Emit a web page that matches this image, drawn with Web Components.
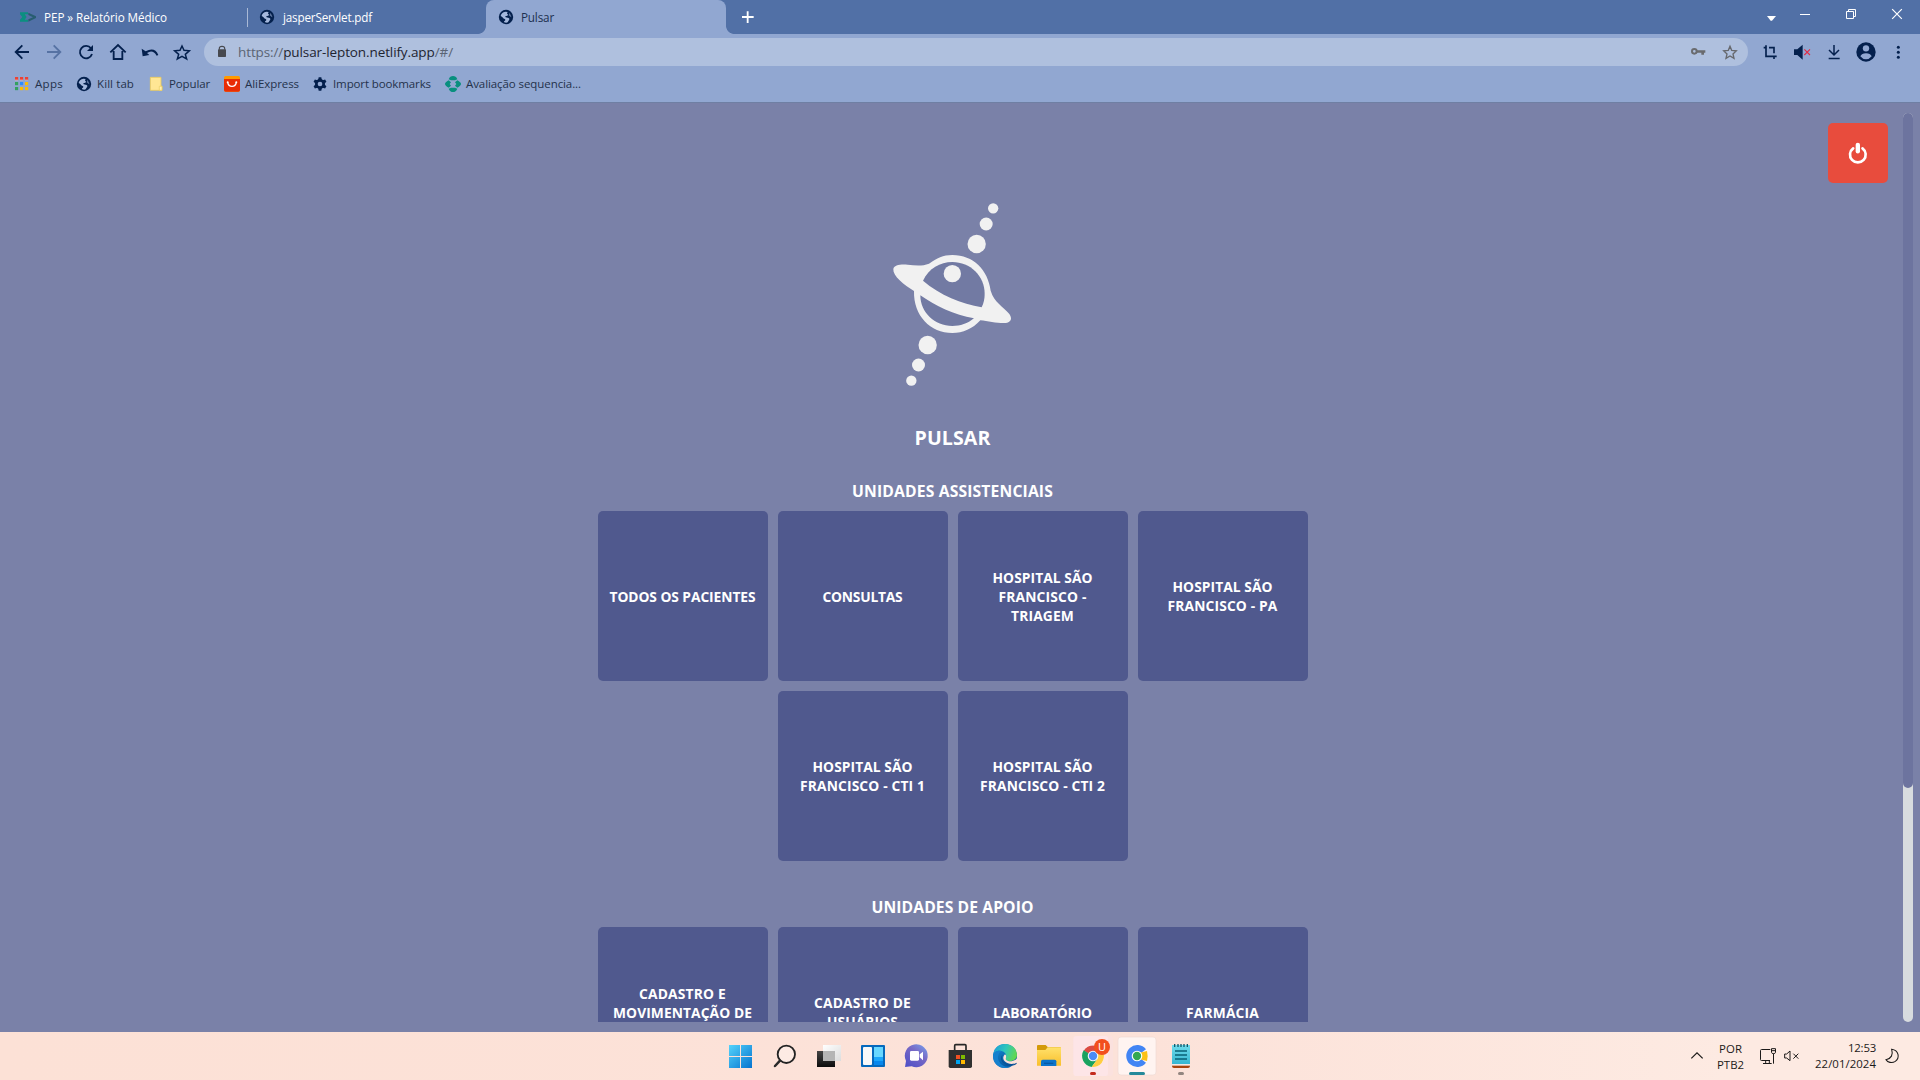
<!DOCTYPE html>
<html lang="pt-BR">
<head>
<meta charset="utf-8">
<title>Pulsar</title>
<style>
html,body{margin:0;padding:0;width:1920px;height:1080px;overflow:hidden}
body{font-family:"Open Sans","Noto Sans",sans-serif;background:#7a81a8}
</style>
</head>
<body>
<desktop-screen></desktop-screen>
<script>
// Icons are drawn on a grid of three units per CSS pixel: [viewBox, markup].
const NAVY = '#04204d';
const globe = (x, y, r = 21) => `<g transform="translate(${x} ${y}) scale(${r / 21})"><circle r="21.5" fill="${NAVY}"/><path d="M-16-3C-15-10-10-15-2-16L5-15C3-12 2-10 5-8C8-6 5-3 1-3C-2-3-3-1-1 1C3 2 8 2 10 5C11 8 7 11 5 16C2 18-3 17-5 16C-7 14-6 12-3 11C-1 8-2 6-6 5C-9 4-10-1-16-3Z" fill="#a3b7dc"/><path d="M9-12C13-9 16-4 16 1C13 0 12-3 9-4C7-6 10-8 9-12Z" fill="#a3b7dc" opacity=".55"/></g>`;
const ICONS = {
  pep: ['57 36 54 30', '<path d="M60 37H84V43H74L80 51L74 59H84V65H60V59L67 51L60 43Z" fill="#0b8f80"/><path d="M85 38L108 49V54L85 65V58L99 51.500L85 45Z" fill="#275d70"/>'],
  globeTab: ['777 27 48 48', globe(801, 51)],
  globeTabActive: ['294 27 48 48', globe(318, 51)],
  plus: ['1024 30 40 42', '<path d="M1027 51H1062M1044 33.500V69" stroke="#fff" stroke-width="5.500"/>'],
  back: ['18 114 96 84', `<path d="M87 156H48M67 136L47 156L67 176" fill="none" stroke="${NAVY}" stroke-width="5.500"/>`],
  forward: ['114 114 96 84', '<path d="M141 156H180M161 136L181 156L161 176" fill="none" stroke="#5672a3" stroke-width="5.500"/>'],
  reload: ['210 114 96 84', `<path d="M273 145A18.500 18.500 0 1 0 276 162" fill="none" stroke="${NAVY}" stroke-width="5.500"/><path d="M279 135V153H261Z" fill="${NAVY}"/>`],
  home: ['306 114 96 84', `<path d="M341 153V177H367V153M331 157L354 135L377 157" fill="none" stroke="${NAVY}" stroke-width="5.500"/>`],
  undo: ['402 114 96 84', `<path d="M425 146L428 169L448 165L441 159Q458 147 470 167L475 165Q464 139 437 154Z" fill="${NAVY}"/>`],
  star: ['498 114 96 84', `<path d="M546 138L552 151L568 152.500L556 163L560 177L546 169L532 177L536 163L524 152.500L540 151Z" fill="none" stroke="${NAVY}" stroke-width="4.500"/>`],
  lock: ['648 132 36 48', '<path d="M658 149V145Q658 139 666 139Q674 139 674 145V149" fill="none" stroke="#47494f" stroke-width="3.500"/><rect x="654" y="148" width="24" height="23" rx="2" fill="#47494f"/>'],
  key: ['126 114 96 84', '<circle cx="163" cy="154" r="7" fill="none" stroke="#6a6b6e" stroke-width="6"/><path d="M171 151H196V158H192V164H184V158H171Z" fill="#6a6b6e"/>'],
  starUrl: ['222 114 96 84', '<path d="M270 139L275 151L289 152.500L279 162L282 175L270 168L258 175L261 162L251 152.500L265 151Z" fill="none" stroke="#66686d" stroke-width="4"/>'],
  crop: ['342 114 96 84', `<path d="M371 143H378M378 136V169H410M387 143H402V160M402 169V177" fill="none" stroke="${NAVY}" stroke-width="5"/>`],
  mute: ['438 114 96 84', `<path d="M462 148H472L488 134V179L472 165H462Z" fill="${NAVY}"/><path d="M493 148L510 165M510 148L493 165" stroke="#e22a44" stroke-width="3.200"/>`],
  download: ['534 114 96 84', `<path d="M582 135V164M567 150L582 165L597 150M566 175.500H599" fill="none" stroke="${NAVY}" stroke-width="4.500"/>`],
  profile: ['630 114 96 84', `<circle cx="678" cy="156" r="29" fill="${NAVY}"/><circle cx="678" cy="145" r="9.500" fill="#91a7d1"/><path d="M661 169Q665 160 678 160Q691 160 695 169Q688 178 678 178Q668 178 661 169Z" fill="#91a7d1"/>`],
  dots: ['726 114 96 84', `<g fill="${NAVY}"><circle cx="775" cy="142" r="4.500"/><circle cx="775" cy="157" r="4.500"/><circle cx="775" cy="172" r="4.500"/></g>`],
  caret: ['372 0 45 102', '<path d="M381 48H408L396 62H392Z" fill="#fff"/>'],
  minimize: ['426 0 138 102', '<path d="M480 43.500H510" stroke="#fff" stroke-width="3"/>'],
  restore: ['564 0 138 102', '<path d="M619.500 34.500H640.500V55.500H619.500ZM625.500 34V28.500H646.500V49.500H641" fill="none" stroke="#fff" stroke-width="3"/>'],
  close: ['702 0 138 102', '<path d="M756.500 27.500L785.500 56.500M785.500 27.500L756.500 56.500" stroke="#fff" stroke-width="3.600"/>'],
  apps: ['42 228 45 48', ['#ea4335', '#ea4335', '#ea4335', '#34a060', '#2d8cff', '#fbbc05', '#34a060', '#fbbc05', '#fbbc05'].map((c, i) => `<rect x="${45 + i % 3 * 15}" y="${231 + (i / 3 | 0) * 15}" width="9.500" height="9.500" fill="${c}"/>`).join('') + '<path d="M45 240H54M60 240H69M75 240H84" stroke="#fff" stroke-width="2" opacity=".6"/>'],
  globeBookmark: ['228 228 48 48', globe(252, 252)],
  folder: ['447 228 42 48', '<path d="M451 232H483V258H486V271H451Z" fill="#ffe694" stroke="#eccb5c" stroke-width="2.500"/><path d="M478 271V259H486V271Z" fill="#fff0b5" stroke="#eccb5c" stroke-width="2"/>'],
  ali: ['669 225 54 54', '<rect x="672" y="228" width="48" height="47" rx="5" fill="#ff9a00"/><path d="M672 237H720V270Q720 275 715 275H677Q672 275 672 270Z" fill="#e92d05"/><path d="M683 247C686 263 706 263 709 247" fill="none" stroke="#fff" stroke-width="4"/><circle cx="683" cy="247" r="3" fill="#fff"/><circle cx="709" cy="247" r="3" fill="#fff"/>'],
  gear: ['936 228 48 48', `<g fill="${NAVY}"><circle cx="960" cy="252" r="15"/><path d="M956 232H964L966 242H954ZM956 272H964L966 262H954Z"/><path d="M956 232H964L966 242H954ZM956 272H964L966 262H954Z" transform="rotate(60 960 252)"/><path d="M956 232H964L966 242H954ZM956 272H964L966 262H954Z" transform="rotate(-60 960 252)"/></g><circle cx="960" cy="252" r="7" fill="#91a7d1"/>`],
  green: ['132 225 54 54', '<g fill="#088f7e"><path d="M146 238Q150 228 159 228Q168 228 172 238L165 241H153Z"/><path d="M146 266Q150 276 159 276Q168 276 172 266L165 263H153Z"/><path d="M146 241Q135 247 135 252Q135 257 146 263L153 257L149 252L153 247Z"/><path d="M172 241Q183 247 183 252Q183 257 172 263L165 257L169 252L165 247Z"/></g>'],
  power: ['564 369 180 180', '<path d="M639.500 445A23.500 23.500 0 1 0 667.500 445" fill="none" stroke="#fff" stroke-width="8" stroke-linecap="round"/><path d="M653.500 434.500V454" stroke="#fff" stroke-width="13" stroke-linecap="round"/>'],
  pulsar: ['-6 0 510 600', `<g fill="#f1f1f1"><circle cx="369.500" cy="55" r="15.500"/><circle cx="348.500" cy="102" r="19.500"/><circle cx="320" cy="162" r="27.500"/><circle cx="173" cy="465" r="27.500"/><circle cx="145.500" cy="525" r="19.500"/><circle cx="124" cy="572" r="15.500"/>
    <path d="M70 238C71 224 94 222 113 224C134 226 156 229 177 221C201 204 219 195 247 195C310 195 354 240 362 302C373 338 400 350 416 370C427 383 426 396 408 399C388 401 355 394 331 391C307 417 279 429 247 429C181 429 130 377 132 303C102 285 68 258 70 238Z"/></g>
    <g fill="#727aa3"><path d="M159 272C177 235 210 216 247 216C301 216 344 258 344 311C344 326 341 340 335 352C275 341 210 316 159 272Z"/><path d="M151 316C195 346 253 376 312 385C293 401 271 408 247 408C194 408 151 367 151 316Z"/></g><circle cx="247" cy="251" r="26" fill="#f1f1f1"/>`],
  windows: ['24 36 132 144', '<defs><linearGradient id="a" x1="57" y1="75" x2="126" y2="144" gradientUnits="userSpaceOnUse"><stop stop-color="#54d3fb"/><stop offset="1" stop-color="#0573cf"/></linearGradient></defs><path d="M57 75H90V108H57ZM93 75H126V108H93ZM57 111H90V144H57ZM93 111H126V144H93Z" fill="url(#a)"/>'],
  search: ['156 36 132 144', '<circle cx="229" cy="103" r="26" fill="#fff" fill-opacity=".3" stroke="#222" stroke-width="5.500"/><path d="M210 122L195 138" stroke="#2a2a2a" stroke-width="7.500" stroke-linecap="round"/>'],
  taskview: ['288 36 132 144', '<defs><linearGradient id="a" x2="0" y2="1"><stop stop-color="#454545"/><stop offset="1" stop-color="#0c0c0c"/></linearGradient><linearGradient id="b" x2="1" y2="1"><stop stop-color="#fff"/><stop offset="1" stop-color="#dcdcdc"/></linearGradient></defs><rect x="339" y="75" width="54" height="48" fill="url(#b)"/><path d="M321 93H375V141H321Z" fill="url(#a)"/><path d="M339 93H375V123H339Z" fill="#b5b5b5"/>'],
  widgets: ['420 36 132 144', '<rect x="453" y="75" width="72" height="66" rx="3" fill="#0569bd"/><rect x="459" y="81" width="27" height="54" rx="3" fill="#f7f8f9"/><path d="M492 81H519V111H492Z" fill="#68d7ff"/><path d="M492 111H519V123H492Z" fill="#1ba6fb"/><path d="M492 123H519V135H492Z" fill="#0787ed"/>'],
  chat: ['552 36 132 144', '<defs><linearGradient id="a" x1="1" y1="0" x2=".2" y2="1"><stop stop-color="#76a4f0"/><stop offset=".45" stop-color="#7869c5"/><stop offset="1" stop-color="#5151c7"/></linearGradient></defs><path d="M585 141L588 123A34.500 34.500 0 1 1 605 139Z" fill="url(#a)"/><rect x="600" y="93" width="27" height="29" rx="4" fill="#fff"/><path d="M629 103L639 95V121L629 112Z" fill="#fff"/>'],
  store: ['-36 36 132 144', '<path d="M14 91V77Q14 74 17 74H45Q48 74 48 77V91" fill="none" stroke="#272727" stroke-width="5"/><path d="M-4 90H66V139Q66 144 61 144H1Q-4 144-4 139Z" fill="#303030"/><path d="M18 105H30V117H18Z" fill="#f25022"/><path d="M33 105H45V117H33Z" fill="#7fba00"/><path d="M18 120H30V132H18Z" fill="#00a4ef"/><path d="M33 120H45V132H33Z" fill="#ffb900"/>'],
  edge: ['96 36 132 144', '<defs><linearGradient id="a" x1="0" y1=".2" x2="1" y2=".5"><stop stop-color="#1a9ed8"/><stop offset=".5" stop-color="#30c6bb"/><stop offset="1" stop-color="#61d84f"/></linearGradient><linearGradient id="b" x2=".7" y2="1"><stop stop-color="#158fd9"/><stop offset="1" stop-color="#075198"/></linearGradient></defs><circle cx="165" cy="108" r="36" fill="url(#b)"/><path d="M130 103C134 80 148 72 166 72C187 72 201 88 201 105C201 117 190 124 178 123C169 122 165 119 168 113C172 102 159 90 144 92C137 93 132 97 130 103Z" fill="url(#a)"/><path d="M129 108C130 96 141 90 154 94C143 100 142 115 147 124C154 139 171 144 185 138C178 143 172 144 165 144C144 144 129 128 129 108Z" fill="#1580ce"/><path d="M158 104C151 116 161 132 178 134C186 135 193 132 198 128C201 126 201 130 199 132C189 141 171 137 161 129C152 122 151 110 158 104Z" fill="#0a4f92"/><path d="M165 103C172 108 166 115 168 119C170 122 179 125 187 123C193 122 198 119 202 115V127C195 132 183 134 174 130C160 125 155 112 165 103Z" fill="#fce2d8"/>'],
  explorer: ['228 36 132 144', '<defs><linearGradient id="a" x2="0" y2="1"><stop stop-color="#ffe16b"/><stop offset="1" stop-color="#f9bf2c"/></linearGradient></defs><path d="M261 78Q261 75 264 75H287L293 81H330Q333 81 333 85V100H261Z" fill="#d49a09"/><path d="M261 90H286L293 82H333V137H261Z" fill="url(#a)"/><path d="M273 138V124Q273 119 278 119H314Q319 119 319 124V138Z" fill="#0b74cb"/><path d="M282 128H310V132H282Z" fill="#065aa6"/>'],
  chrome: ['360 36 132 144', '<rect x="370" y="48" width="119" height="120" rx="10" fill="#fbe1de"/><rect x="370" y="48" width="104" height="120" rx="10" fill="#fde5e7"/><circle cx="429" cy="108" r="33" fill="#fff"/><path d="M429 108L401 92A33 33 0 0 1 457 92Z" fill="#db4b43"/><path d="M429 108L401 91A33 33 0 0 0 425 141L443 116Z" fill="#19a25f"/><path d="M443 97H460A33 33 0 0 1 425 141L443 116Z" fill="#ffcd41"/><circle cx="429" cy="108" r="16" fill="#f4f6fa"/><circle cx="429" cy="108" r="12.500" fill="#4b8bf5"/><circle cx="456" cy="81" r="24" fill="#f24f1d"/><rect x="420" y="156" width="18" height="9" rx="4.500" fill="#c42b1c"/>'],
  chromeActive: ['492 36 132 144', '<rect x="504" y="51" width="114" height="114" rx="9" fill="#fff4f1" stroke="#eedbd4" stroke-width="2"/><path d="M588 88A33 33 0 1 0 588 128L561 108Z" fill="#4285f4"/><path d="M570 98L591 93Q595 108 591 123L570 118Z" fill="#fbc116"/><circle cx="561" cy="108" r="16" fill="#fff"/><circle cx="561" cy="108" r="12.500" fill="#34a853"/><rect x="537" y="156" width="48" height="9" rx="4.500" fill="#25899a"/>'],
  notepad: ['624 36 132 144', '<defs><linearGradient id="a" x2="0" y2="1"><stop stop-color="#70dcec"/><stop offset="1" stop-color="#35b6d1"/></linearGradient></defs><path d="M666 132H720V138Q720 144 714 144H672Q666 144 666 138Z" fill="#a9440c"/><path d="M666 130H720V137H666Z" fill="#f4e8e1"/><path d="M666 75H720V132H666Z" fill="url(#a)"/><path d="M675 93H711M675 105H711M675 117H711" stroke="#096277" stroke-width="5"/><path d="M674 72V81M684 72V81M693 72V81M702 72V81M712 72V81" stroke="#14596c" stroke-width="4"/><rect x="684" y="156" width="18" height="9" rx="4.500" fill="#938680"/>'],
  chevron: ['60 84 42 48', '<path d="M64 115L81 98.500L98 115" fill="none" stroke="#1c1a19" stroke-width="3.600"/>'],
  network: ['270 78 54 60', '<path d="M304 88.500H277.500Q274.500 88.500 274.500 92V119Q274.500 121.500 277.500 121.500H303M290 122V130M301 122V130M282 130.500H308M307.500 86H319.500V97Q319 101 313.500 101Q308 101 307.500 97ZM307 92H320M313.500 101V131" fill="none" stroke="#1c1a19" stroke-width="3"/>'],
  volume: ['342 84 51 48', '<path d="M347 102H353L363 93V122L353 114H347Z" fill="none" stroke="#1c1a19" stroke-width="3"/><path d="M373 101L388 116M388 101L373 116" stroke="#1c1a19" stroke-width="3"/>'],
  moon: ['645 81 48 54', '<path d="M668 88C690 91 693 114 679 124C668 131 656 127 651 119C667 116 673 104 668 88Z" fill="none" stroke="#1c1a19" stroke-width="3.200"/>']
};

customElements.define('ui-icon', class extends HTMLElement {
  connectedCallback() {
    const [box, art] = ICONS[this.getAttribute('name')];
    const [, , w, h] = box.split(' ').map(Number);
    this.attachShadow({mode: 'open'}).innerHTML = `<style>:host{display:block;flex:none;width:${w / 3}px;height:${h / 3}px}svg{display:block;overflow:visible}</style><svg width="${w / 3}" height="${h / 3}" viewBox="${box}">${art}</svg>`;
  }
});

// One line of text whose tracking is adjusted so that it fills the width in "w".
customElements.define('fit-text', class extends HTMLElement {
  connectedCallback() {
    const w = +this.getAttribute('w');
    this.attachShadow({mode: 'open'}).innerHTML = `<style>:host{display:block;flex:none;width:${w}px;white-space:nowrap;text-align:left}span{display:inline-block}</style><span><slot></slot></span>`;
    const span = this.shadowRoot.querySelector('span');
    const n = this.textContent.length;
    span.style.letterSpacing = (w - span.getBoundingClientRect().width) / n + 'px';
  }
});

const define = (name, html) => customElements.define(name, class extends HTMLElement {
  connectedCallback() {
    if (this.shadowRoot) return;
    const t = document.createElement('template');
    t.innerHTML = html;
    this.attachShadow({mode: 'open'}).append(document.importNode(t.content, true));
  }
});

define('tab-strip', `<style>
:host{display:flex;height:34px;background:#5170a6;color:#fff;font-size:11.7px;line-height:34px}
.tab{display:flex;align-items:center;box-sizing:border-box;height:34px}
.one{width:247px;padding-left:19px}.one fit-text{margin-left:7px}
.two{width:239px;padding-left:12px;background:linear-gradient(#a9b9d6,#a9b9d6) 0 8px/1px 19px no-repeat}.two fit-text{margin-left:8px}
.on{width:240px;padding-left:12px;background:#91a7d1;border-radius:8px 8px 0 0;color:#1c3050;position:relative}.on fit-text{margin-left:7px}
.on::before,.on::after{content:"";position:absolute;bottom:0;width:8px;height:8px}
.on::before{left:-8px;background:radial-gradient(circle at 0 0,transparent 7.500px,#91a7d1 8.200px)}
.on::after{right:-8px;background:radial-gradient(circle at 100% 0,transparent 7.500px,#91a7d1 8.200px)}
.plus{margin:10px 0 0 15px}.win{display:flex;margin-left:auto}
</style>
<div class="tab one"><ui-icon name="pep"></ui-icon><fit-text w="123">PEP » Relatório Médico</fit-text></div>
<div class="tab two"><ui-icon name="globeTab"></ui-icon><fit-text w="89">jasperServlet.pdf</fit-text></div>
<div class="tab on"><ui-icon name="globeTabActive"></ui-icon><fit-text w="33">Pulsar</fit-text></div>
<ui-icon class="plus" name="plus"></ui-icon>
<div class="win"><ui-icon name="caret"></ui-icon><ui-icon name="minimize" style="margin-left:3px"></ui-icon><ui-icon name="restore"></ui-icon><ui-icon name="close"></ui-icon></div>`);

define('nav-bar', `<style>
:host{display:flex;box-sizing:border-box;height:32px;padding:4px 6px 0;background:#91a7d1}
.url{display:flex;align-items:center;flex:1;height:28px;margin:0 6px;border-radius:14px;background:#afc0de;box-sizing:border-box;padding:0 2px 0 12px;color:#1e2430;font-size:13.500px;line-height:28px}
fit-text{margin:0 auto 0 10px}i{font-style:normal;color:#5a6474}
</style>
<ui-icon name="back"></ui-icon><ui-icon name="forward"></ui-icon><ui-icon name="reload"></ui-icon><ui-icon name="home"></ui-icon><ui-icon name="undo"></ui-icon><ui-icon name="star"></ui-icon>
<div class="url"><ui-icon name="lock"></ui-icon><fit-text w="215"><i>https://</i>pulsar-lepton.netlify.app<i>/#/</i></fit-text><ui-icon name="key"></ui-icon><ui-icon name="starUrl"></ui-icon></div>
<ui-icon name="crop"></ui-icon><ui-icon name="mute"></ui-icon><ui-icon name="download"></ui-icon><ui-icon name="profile"></ui-icon><ui-icon name="dots"></ui-icon>`);

define('book-mark', `<style>:host{display:flex;align-items:center;gap:var(--gap,6px)}</style><slot></slot>`);
define('bookmark-bar', `<style>
:host{display:flex;align-items:center;box-sizing:border-box;height:37px;padding:0 0 1px 14px;background:#91a7d1;border-bottom:1px solid #6f7fa3;color:#24324b;font-size:11.500px;line-height:20px}
</style>
<book-mark><ui-icon name="apps"></ui-icon><fit-text w="28">Apps</fit-text></book-mark>
<book-mark style="margin-left:13px;--gap:5px"><ui-icon name="globeBookmark"></ui-icon><fit-text w="37">Kill tab</fit-text></book-mark>
<book-mark style="margin-left:15px"><ui-icon name="folder"></ui-icon><fit-text w="41">Popular</fit-text></book-mark>
<book-mark style="margin-left:13px;--gap:4px"><ui-icon name="ali"></ui-icon><fit-text w="54">AliExpress</fit-text></book-mark>
<book-mark style="margin-left:13px;--gap:5px"><ui-icon name="gear"></ui-icon><fit-text w="98">Import bookmarks</fit-text></book-mark>
<book-mark style="margin-left:13px;--gap:4px"><ui-icon name="green"></ui-icon><fit-text w="115">Avaliação sequencia...</fit-text></book-mark>`);

define('unit-card', `<style>
:host{display:flex;flex-direction:column;align-items:center;justify-content:center;box-sizing:border-box;width:170px;height:170px;padding-right:1px;border-radius:5px;background:#50598e;font-size:13.800px;line-height:19px}
</style><slot></slot>`);
define('unit-group', `<style>
:host{display:flex;flex-direction:column;align-items:center;gap:8px}
.title{height:24px;padding-right:1px;font-size:15.700px;line-height:24px}
.cards{display:flex;flex-wrap:wrap;justify-content:center;gap:10px;width:710px}
</style><div class="title"><slot name="title"></slot></div><div class="cards"><slot></slot></div>`);

define('scroll-rail', `<style>
:host{display:flex;flex-direction:column;width:10px;height:909px;border-radius:5px;background:#d8dcdf}
div{height:675px;border-radius:5px;background:#6d749f}
</style><div></div>`);

define('pulsar-page', `<style>
:host{display:flex;box-sizing:border-box;height:929px;padding:10px 7px 10px 3px;background:#7a81a8;color:#fff;font-weight:700;position:relative}
main{display:flex;flex-direction:column;align-items:center;width:1900px;height:909px;overflow:hidden}
.logo{margin-top:77px}.name{margin-top:34px;padding-right:1px;font-size:19.600px;line-height:28px}
unit-group{flex:none}
.off{position:absolute;left:1828px;top:20px;width:60px;height:60px;border-radius:5px;background:#e84c3d}
.blank{height:19px}
</style>
<main>
<ui-icon class="logo" name="pulsar"></ui-icon>
<fit-text class="name" w="76">PULSAR</fit-text>
<unit-group style="margin-top:27px"><fit-text slot="title" w="201">UNIDADES ASSISTENCIAIS</fit-text>
<unit-card><fit-text w="146">TODOS OS PACIENTES</fit-text></unit-card>
<unit-card><fit-text w="80">CONSULTAS</fit-text></unit-card>
<unit-card><fit-text w="100">HOSPITAL SÃO</fit-text><fit-text w="88">FRANCISCO -</fit-text><fit-text w="63">TRIAGEM</fit-text></unit-card>
<unit-card><fit-text w="100">HOSPITAL SÃO</fit-text><fit-text w="110">FRANCISCO - PA</fit-text></unit-card>
<unit-card><fit-text w="100">HOSPITAL SÃO</fit-text><fit-text w="125">FRANCISCO - CTI 1</fit-text></unit-card>
<unit-card><fit-text w="100">HOSPITAL SÃO</fit-text><fit-text w="125">FRANCISCO - CTI 2</fit-text></unit-card>
</unit-group>
<unit-group style="margin-top:34px"><fit-text slot="title" w="162">UNIDADES DE APOIO</fit-text>
<unit-card><fit-text w="87">CADASTRO E</fit-text><fit-text w="139">MOVIMENTAÇÃO DE</fit-text><div class="blank"></div></unit-card>
<unit-card><fit-text w="97">CADASTRO DE</fit-text><fit-text w="71">USUÁRIOS</fit-text></unit-card>
<unit-card><fit-text w="99">LABORATÓRIO</fit-text></unit-card>
<unit-card><fit-text w="73">FARMÁCIA</fit-text></unit-card>
</unit-group>
</main>
<scroll-rail></scroll-rail>
<div class="off"><ui-icon name="power"></ui-icon></div>`);

define('task-bar', `<style>
:host{display:flex;box-sizing:border-box;height:48px;padding-left:718px;background:linear-gradient(90deg,#fce1d6 0%,#fce2d9 60%,#fdeae2 90%);color:#1c1a19;font-size:11.400px;line-height:16px}
.app{position:relative}
.badge{position:absolute;left:24px;top:4px;width:16px;text-align:center;color:#fff;font-size:11px;line-height:22px}
.tray{display:flex;align-items:center;margin-left:auto;padding-right:19px}
.lang,.clock{display:flex;flex-direction:column}
.lang{align-items:center;margin-left:13px;padding-top:1px}.clock{align-items:flex-end;margin:0 8px 0 15px;padding-bottom:1px}
</style>
<ui-icon name="windows"></ui-icon><ui-icon name="search"></ui-icon><ui-icon name="taskview"></ui-icon><ui-icon name="widgets"></ui-icon><ui-icon name="chat"></ui-icon><ui-icon name="store"></ui-icon><ui-icon name="edge"></ui-icon><ui-icon name="explorer"></ui-icon>
<div class="app"><ui-icon name="chrome"></ui-icon><div class="badge">U</div></div><ui-icon name="chromeActive"></ui-icon><ui-icon name="notepad"></ui-icon>
<div class="tray"><ui-icon name="chevron"></ui-icon><div class="lang"><fit-text w="23">POR</fit-text><fit-text w="27">PTB2</fit-text></div><ui-icon name="network" style="margin-left:15px"></ui-icon><ui-icon name="volume" style="margin-left:6px"></ui-icon><div class="clock"><fit-text w="28">12:53</fit-text><fit-text w="61">22/01/2024</fit-text></div><ui-icon name="moon" style="margin-right:1px"></ui-icon></div>`);

define('desktop-screen', `<style>:host{display:flex;flex-direction:column;width:1920px;height:1080px;overflow:hidden}</style>
<tab-strip></tab-strip><nav-bar></nav-bar><bookmark-bar></bookmark-bar><pulsar-page></pulsar-page><task-bar></task-bar>`);
</script>
</body>
</html>
